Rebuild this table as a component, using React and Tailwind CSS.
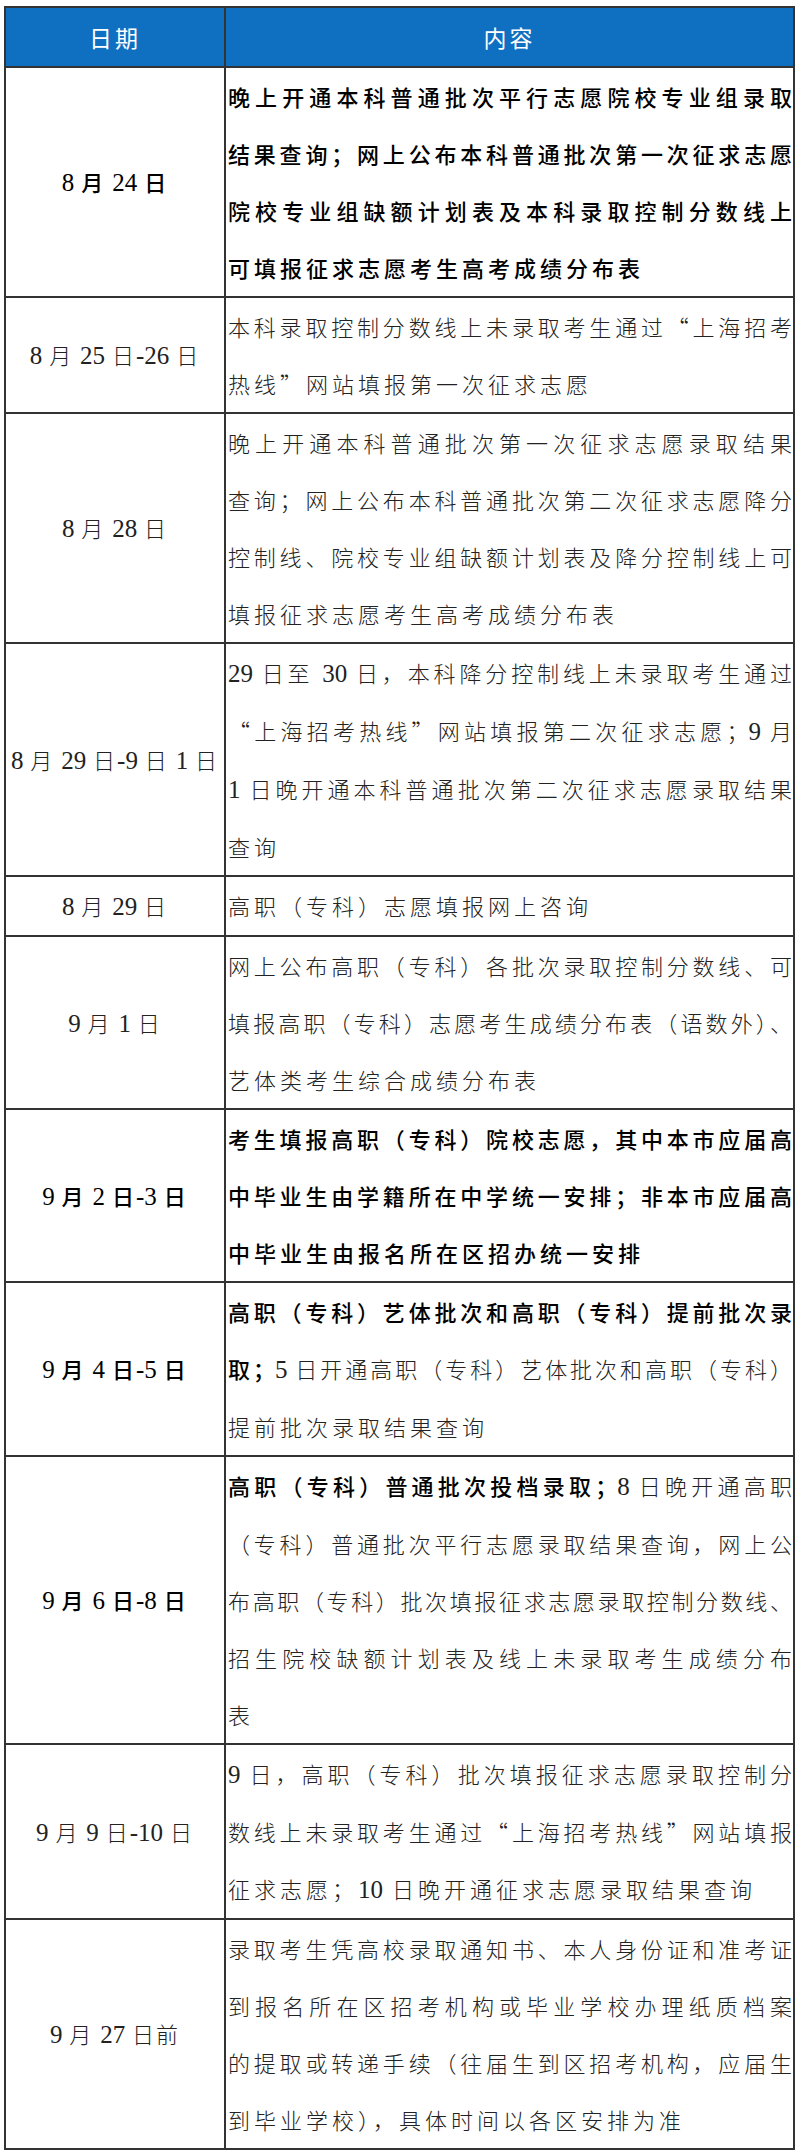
import React from "react";

const rows = [
  {
    date: "8 月 24 日",
    bold: true,
    lines: [
      "晚上开通本科普通批次平行志愿院校专业组录取",
      "结果查询；网上公布本科普通批次第一次征求志愿",
      "院校专业组缺额计划表及本科录取控制分数线上",
      "可填报征求志愿考生高考成绩分布表",
    ],
  },
  {
    date: "8 月 25 日-26 日",
    lines: [
      "本科录取控制分数线上未录取考生通过“上海招考",
      "热线”网站填报第一次征求志愿",
    ],
  },
  {
    date: "8 月 28 日",
    lines: [
      "晚上开通本科普通批次第一次征求志愿录取结果",
      "查询；网上公布本科普通批次第二次征求志愿降分",
      "控制线、院校专业组缺额计划表及降分控制线上可",
      "填报征求志愿考生高考成绩分布表",
    ],
  },
  {
    date: "8 月 29 日-9 日 1 日",
    lines: [
      "29 日至 30 日，本科降分控制线上未录取考生通过",
      "“上海招考热线”网站填报第二次征求志愿；9 月",
      "1 日晚开通本科普通批次第二次征求志愿录取结果",
      "查询",
    ],
  },
  {
    date: "8 月 29 日",
    lines: ["高职（专科）志愿填报网上咨询"],
  },
  {
    date: "9 月 1 日",
    lines: [
      "网上公布高职（专科）各批次录取控制分数线、可",
      "填报高职（专科）志愿考生成绩分布表（语数外）、",
      "艺体类考生综合成绩分布表",
    ],
  },
  {
    date: "9 月 2 日-3 日",
    bold: true,
    dateBold: true,
    lines: [
      "考生填报高职（专科）院校志愿，其中本市应届高",
      "中毕业生由学籍所在中学统一安排；非本市应届高",
      "中毕业生由报名所在区招办统一安排",
    ],
  },
  {
    date: "9 月 4 日-5 日",
    dateBold: true,
    lines: [
      [["高职（专科）艺体批次和高职（专科）提前批次录", true]],
      [["取；", true], ["5 日开通高职（专科）艺体批次和高职（专科）", false]],
      "提前批次录取结果查询",
    ],
  },
  {
    date: "9 月 6 日-8 日",
    dateBold: true,
    lines: [
      [["高职（专科）普通批次投档录取；", true], ["8 日晚开通高职", false]],
      "（专科）普通批次平行志愿录取结果查询，网上公",
      "布高职（专科）批次填报征求志愿录取控制分数线、",
      "招生院校缺额计划表及线上未录取考生成绩分布",
      "表",
    ],
  },
  {
    date: "9 月 9 日-10 日",
    lines: [
      "9 日，高职（专科）批次填报征求志愿录取控制分",
      "数线上未录取考生通过“上海招考热线”网站填报",
      "征求志愿；10 日晚开通征求志愿录取结果查询",
    ],
  },
  {
    date: "9 月 27 日前",
    lines: [
      "录取考生凭高校录取通知书、本人身份证和准考证",
      "到报名所在区招考机构或毕业学校办理纸质档案",
      "的提取或转递手续（往届生到区招考机构，应届生",
      "到毕业学校），具体时间以各区安排为准",
    ],
  },
];

function Runs({ text }) {
  return text.split(/([0-9-]+)/).map((p, i) =>
    /^[0-9-]+$/.test(p) ? (
      <span
        key={i}
        className="font-['Liberation_Serif',serif] text-[25px] tracking-normal"
      >
        {p}
      </span>
    ) : (
      <React.Fragment key={i}>{p}</React.Fragment>
    )
  );
}

function Line({ line, rowBold, last }) {
  const segs = typeof line === "string" ? [[line, !!rowBold]] : line;
  return (
    <div
      className={
        last
          ? "tracking-[4px]"
          : "tracking-normal text-justify [text-align-last:justify]"
      }
    >
      {segs.map(([t, b], i) => (
        <span
          key={i}
          className={b ? "font-medium text-black" : "font-light text-[#222]"}
        >
          <Runs text={t} />
        </span>
      ))}
    </div>
  );
}

export default function App() {
  return (
    <div className="bg-white w-[800px] min-h-[2150px] pt-[6px] pl-[4px] pr-[5px] font-['Noto_Sans_CJK_SC',sans-serif]">
      <div className="border-2 border-[#333]">
        <div className="flex h-[60px] bg-[#0f6fc1] border-b-2 border-[#333] text-white text-[23px] tracking-[3px]">
          <div className="w-[220px] shrink-0 border-r-2 border-[#333] flex items-center justify-center">
            日期
          </div>
          <div className="flex-1 flex items-center justify-center">内容</div>
        </div>
        {rows.map((r, idx) => (
          <div
            key={idx}
            className={
              "flex text-[22px] leading-[57px] " +
              (idx < rows.length - 1 ? "border-b-2 border-[#333]" : "")
            }
          >
            <div
              className={
                "w-[220px] shrink-0 border-r-2 border-[#333] flex items-center justify-center whitespace-nowrap tracking-[2px] " +
                (r.bold || r.dateBold
                  ? "font-medium text-black"
                  : "font-light text-[#222]")
              }
            >
              <span>
                <Runs text={r.date} />
              </span>
            </div>
            <div className="flex-1 min-w-0 pl-[2px] pr-[1px] overflow-hidden">
              {r.lines.map((l, i) => (
                <Line
                  key={i}
                  line={l}
                  rowBold={r.bold}
                  last={i === r.lines.length - 1}
                />
              ))}
            </div>
          </div>
        ))}
      </div>
    </div>
  );
}
